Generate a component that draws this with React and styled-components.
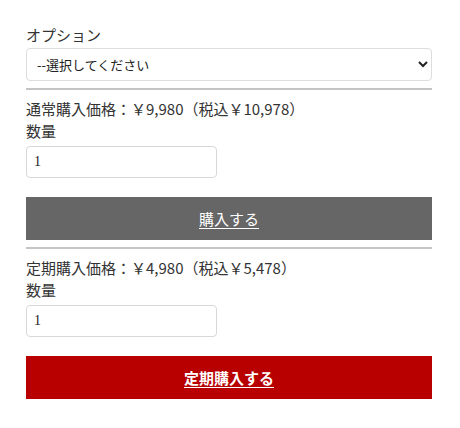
import styled, { createGlobalStyle } from "styled-components";

const GlobalStyle = createGlobalStyle`
  body {
    margin: 0;
    background: #fff;
    font-family: "Noto Sans CJK JP", "Noto Sans", sans-serif;
    color: #333;
  }
`;

const Wrapper = styled.div`
  width: 406px;
  padding: 24px 0 0 26px;
`;

const Label = styled.div`
  font-size: 15px;
  line-height: 22px;
`;

const Select = styled.select`
  display: block;
  width: 100%;
  height: 33px;
  margin-top: 2px;
  padding: 0 6px;
  font-family: "Noto Sans CJK JP", sans-serif;
  font-size: 13px;
  color: #222;
  background: #fff;
  border: 1px solid #ddd;
  border-radius: 4px;
`;

const Rule = styled.hr`
  margin: ${(p) => p.$top}px 0 0;
  border: none;
  border-top: 2px solid #c4c4c4;
`;

const Price = styled.div`
  font-size: 15px;
  line-height: 22px;
  margin-top: 8px;
`;

const Input = styled.input`
  display: block;
  box-sizing: border-box;
  width: 191px;
  height: 32px;
  margin-top: 4px;
  padding: 0 7px;
  font-family: "Liberation Serif", serif;
  font-size: 14px;
  color: #222;
  border: 1px solid #d8d8d8;
  border-radius: 4px;
`;

const BuyButton = styled.button`
  display: block;
  width: 100%;
  height: 43px;
  margin-top: 19px;
  border: none;
  background: ${(p) => p.$bg};
  color: #fff;
  font-family: "Noto Sans CJK JP", sans-serif;
  font-size: 15px;
  font-weight: ${(p) => p.$weight};
  text-decoration: underline;
  text-underline-offset: 3px;
  cursor: pointer;
`;

export default function App() {
  return (
    <>
      <GlobalStyle />
      <Wrapper>
        <Label>オプション</Label>
        <Select defaultValue="">
          <option value="">--選択してください</option>
        </Select>
        <Rule $top={7} />
        <Price>通常購入価格：￥9,980（税込￥10,978）</Price>
        <Label>数量</Label>
        <Input defaultValue="1" />
        <BuyButton $bg="#666666" $weight={400}>購入する</BuyButton>
        <Rule $top={7} />
        <Price>定期購入価格：￥4,980（税込￥5,478）</Price>
        <Label>数量</Label>
        <Input defaultValue="1" />
        <BuyButton $bg="#b80000" $weight={700}>定期購入する</BuyButton>
      </Wrapper>
    </>
  );
}
